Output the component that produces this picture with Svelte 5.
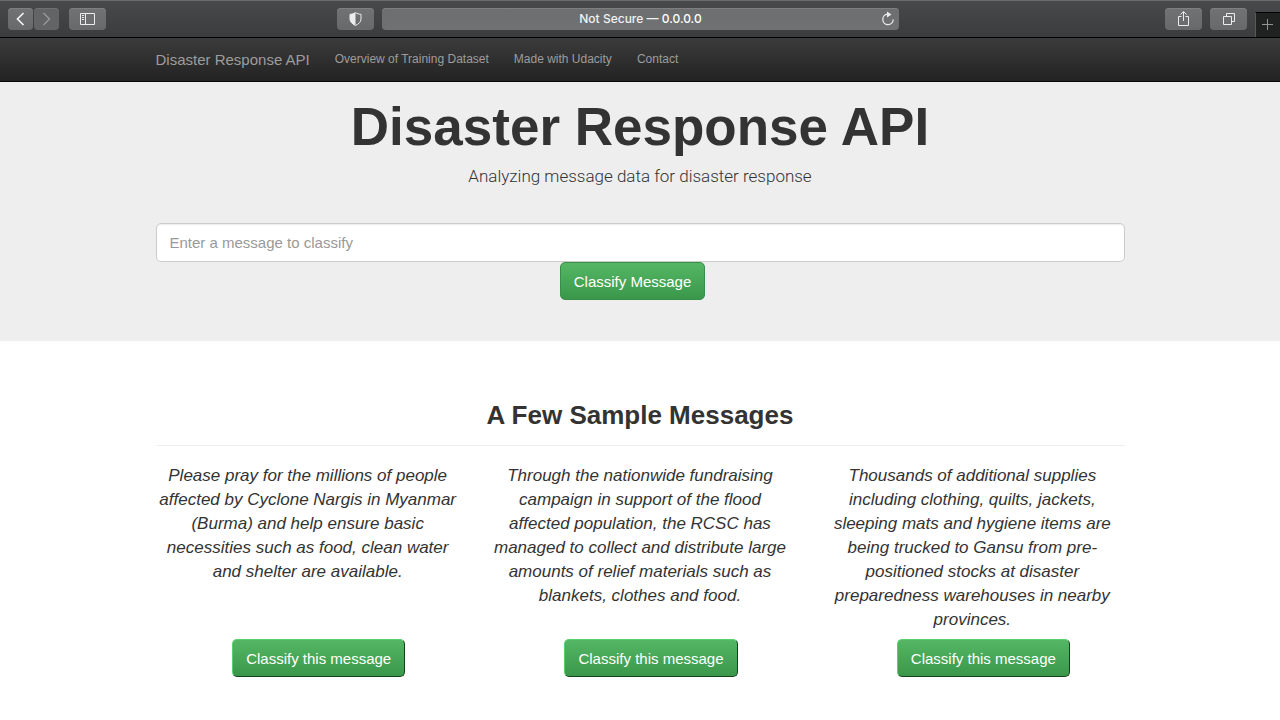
<script>
  const links = ['Overview of Training Dataset', 'Made with Udacity', 'Contact'];
  const samples = [
    'Please pray for the millions of people affected by Cyclone Nargis in Myanmar (Burma) and help ensure basic necessities such as food, clean water and shelter are available.',
    'Through the nationwide fundraising campaign in support of the flood affected population, the RCSC has managed to collect and distribute large amounts of relief materials such as blankets, clothes and food.',
    'Thousands of additional supplies including clothing, quilts, jackets, sleeping mats and hygiene items are being trucked to Gansu from pre-positioned stocks at disaster preparedness warehouses in nearby provinces.'
  ];
  let message = $state('');
</script>

<header class="toolbar">
  <div class="group left">
    <div class="pair">
      <button class="tool small" aria-label="Back">
        <svg width="25" height="22" viewBox="0 0 25 22"><path d="M15.5 5 9.500 11l6 6" stroke="#f2f2f2" stroke-width="1.700" /></svg>
      </button>
      <button class="tool small dim" aria-label="Forward">
        <svg width="25" height="22" viewBox="0 0 25 22"><path d="M9.500 5 15.500 11 9.500 17" stroke="#98999a" stroke-width="1.400" /></svg>
      </button>
    </div>
    <button class="tool" aria-label="Show sidebar">
      <svg width="37" height="22" viewBox="0 0 37 22"><path d="M11.500 5.500h14v11h-14zM16.500 5.500v11M13 7.500h2M13 9.500h2M13 11.500h2" stroke="#ececec" /></svg>
    </button>
  </div>
  <div class="group center">
    <button class="tool" aria-label="Privacy report">
      <svg width="37" height="22" viewBox="0 0 37 22"><path d="M18.500 4.500c1.700 1.300 3.500 1.700 5.500 1.800V11c0 3-2.400 5-5.500 6.500C15.400 16 13 14 13 11V6.300c2-.1 3.800-.5 5.500-1.800z" stroke="#ececec" /><path d="M18.500 4.500v13C15.400 16 13 14 13 11V6.300c2-.1 3.800-.5 5.500-1.800z" fill="#ececec" /></svg>
    </button>
    <div class="address">
      <span>Not Secure — <b>0.0.0.0</b></span>
      <button class="reload" aria-label="Reload">
        <svg width="16" height="22" viewBox="0 0 16 22"><path d="M8.500 6.200A5.200 5.200 0 1 0 14.200 11.500" stroke="#ececec" stroke-width="1.300" /><path d="M8 3.500 12.500 6.500 8 9.500z" fill="#ececec" /></svg>
      </button>
    </div>
  </div>
  <div class="group right">
    <button class="tool" aria-label="Share">
      <svg width="37" height="22" viewBox="0 0 37 22"><path d="M16.500 8.500h-3v9h10v-9h-3M18.500 13V4M15.500 6.500l3-3 3 3" stroke="#ececec" /></svg>
    </button>
    <button class="tool" aria-label="Show all tabs">
      <svg width="37" height="22" viewBox="0 0 37 22"><path d="M13.500 8.500h8v8h-8zM16.500 8.500v-3h8v8h-3" stroke="#ececec" /></svg>
    </button>
    <button class="newtab" aria-label="New tab">
      <svg width="24" height="24" viewBox="0 0 24 24"><path d="M11.500 6v11M6 11.500h11" stroke="#929394" /></svg>
    </button>
  </div>
</header>

<nav class="navbar">
  <div class="container nav-inner">
    <a class="brand" href="#top">Disaster Response API</a>
    {#each links as link}
      <a class="link" href="#top">{link}</a>
    {/each}
  </div>
</nav>

<section class="hero" id="top">
  <div class="container">
    <h1>Disaster Response API</h1>
    <p class="lead">Analyzing message data for disaster response</p>
    <form onsubmit={(event) => event.preventDefault()}>
      <input type="text" aria-label="Message" placeholder="Enter a message to classify" bind:value={message} />
      <div class="submit">
        <button class="green" type="submit">Classify Message</button>
      </div>
    </form>
  </div>
</section>

<main class="container">
  <h2>A Few Sample Messages</h2>
  <div class="samples">
    {#each samples as sample}
      <article>
        <p>{sample}</p>
        <div class="action">
          <button class="green raised" onclick={() => (message = sample)}>Classify this message</button>
        </div>
      </article>
    {/each}
  </div>
</main>

<style>
  :global(body) {
    background: #fff;
    color: #333;
    font-family: "Liberation Sans", Arial, sans-serif;
  }
  button {
    font: inherit;
    padding: 0;
    border: 0;
    cursor: pointer;
  }
  svg {
    display: block;
    fill: none;
  }
  .container {
    box-sizing: border-box;
    width: calc(100% - 32px);
    max-width: 969px;
    margin: 0 auto;
  }
  .toolbar {
    box-sizing: border-box;
    height: 38px;
    display: grid;
    grid-template-columns: 337fr 562fr 381fr;
    background: linear-gradient(#47494a, #3b3c3d);
    border-top: 1px solid #696b6c;
    border-bottom: 1px solid #000;
  }
  .group {
    display: flex;
    align-items: center;
    gap: 8px;
  }
  .left {
    padding-left: 8px;
    gap: 10px;
  }
  .right {
    justify-content: flex-end;
  }
  .pair {
    display: flex;
    gap: 1px;
  }
  .tool {
    width: 37px;
    height: 22px;
    border-radius: 4px;
    background: linear-gradient(#707273, #68696a);
    box-shadow: inset 0 1px #7d7f80;
  }
  .small {
    width: 25px;
  }
  .dim {
    background: #626465;
    box-shadow: inset 0 1px #6d6f70;
  }
  .address {
    flex: 1;
    height: 22px;
    display: grid;
    grid-template-columns: 20px 1fr 20px;
    align-items: center;
    border-radius: 4px;
    background: linear-gradient(#6c6e6f, #707172);
    box-shadow: inset 0 1px #7d7f80;
    color: #f2f2f2;
    font: 500 12px/22px Inter, sans-serif;
    text-align: center;
  }
  .address span {
    grid-column: 2;
  }
  .address b {
    font-weight: 500;
    color: #fff;
  }
  .reload {
    width: 16px;
    background: none;
  }
  .newtab {
    align-self: flex-end;
    width: 25px;
    height: 25px;
    background: #202121;
    border-top: 1px solid #000;
    border-left: 1px solid #58595a;
  }
  .navbar {
    background: linear-gradient(#3c3c3c, #222);
    border-bottom: 1px solid #080808;
  }
  .nav-inner {
    display: flex;
    align-items: center;
    gap: 25px;
    height: 43px;
    font-size: 12px;
  }
  .nav-inner a {
    color: #9d9d9d;
    text-decoration: none;
    white-space: nowrap;
  }
  .nav-inner .brand {
    font-size: 15px;
  }
  .link {
    padding-bottom: 2px;
  }
  .hero {
    background: #eee;
    padding: 15px 0 41px;
    text-align: center;
  }
  h1 {
    margin: 0;
    font-size: 53px;
    line-height: 60px;
    font-weight: 700;
  }
  .lead {
    margin: 5px 0 33px;
    font-family: Roboto, sans-serif;
    font-size: 17px;
    line-height: 28px;
    font-weight: 300;
  }
  input {
    display: block;
    box-sizing: border-box;
    width: 100%;
    height: 39px;
    padding: 0 13px;
    border: 1px solid #ccc;
    border-radius: 5px;
    background: #fff;
    box-shadow: inset 0 1px 1px #00000013;
    color: #555;
    font: inherit;
    font-size: 15px;
  }
  input::placeholder {
    color: #999;
  }
  .submit {
    padding-right: 15px;
  }
  .green {
    box-sizing: border-box;
    height: 38px;
    padding: 0 13px;
    border: 1px solid #398f49;
    border-radius: 5px;
    background: linear-gradient(#54b765, #3a974a);
    color: #fff;
    font-size: 15px;
    white-space: nowrap;
  }
  .raised {
    border-color: #55d16e #14421d #14421d #55d16e;
  }
  h2 {
    margin: 57px 0 18px;
    padding-bottom: 13px;
    border-bottom: 1px solid #eee;
    font-size: 26px;
    line-height: 34px;
    text-align: center;
  }
  .samples {
    display: grid;
    grid-template-columns: repeat(3, 1fr);
    gap: 28px;
  }
  article {
    display: flex;
    flex-direction: column;
    justify-content: space-between;
    gap: 7px;
    text-align: center;
  }
  article p {
    margin: 0;
    font-size: 17px;
    line-height: 24px;
    font-style: italic;
  }
  .action {
    padding: 0 0 24px 22px;
  }
</style>
